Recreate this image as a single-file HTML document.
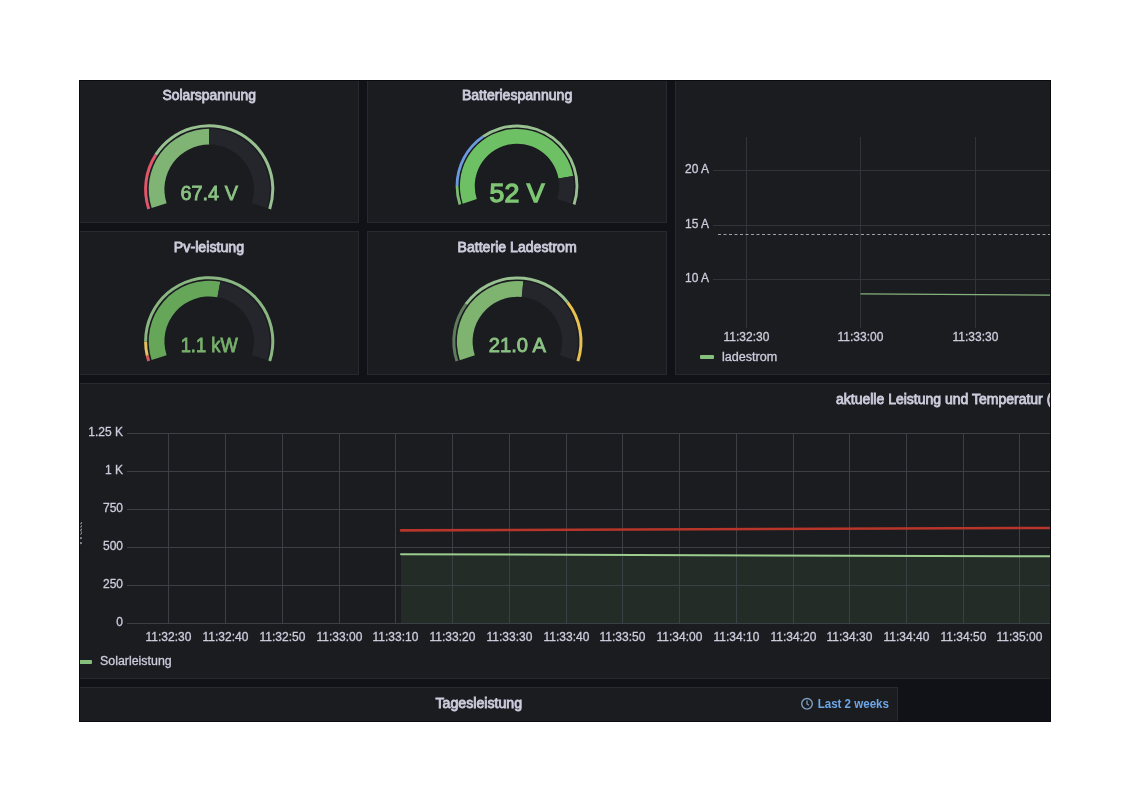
<!DOCTYPE html><html><head><meta charset="utf-8"><style>html,body{margin:0;padding:0;background:#fff;width:1122px;height:793px;overflow:hidden}</style></head><body><svg width="1122" height="793" viewBox="0 0 1122 793" style="display:block;font-family:'Liberation Sans', sans-serif;will-change:transform">
<rect width="1122" height="793" fill="#ffffff"/>
<defs><clipPath id="fc"><rect x="80" y="81" width="970" height="640"/></clipPath></defs>
<rect x="79" y="80" width="972" height="642" fill="#0a0b0d"/>
<g clip-path="url(#fc)">
<rect x="79" y="80" width="971" height="641" fill="#111217"/>
<rect x="59.5" y="79.5" width="299" height="143" fill="#1a1c20" stroke="#27292e" stroke-width="1"/>
<rect x="367.5" y="79.5" width="299" height="143" fill="#1a1c20" stroke="#27292e" stroke-width="1"/>
<rect x="59.5" y="231.5" width="299" height="143" fill="#1a1c20" stroke="#27292e" stroke-width="1"/>
<rect x="367.5" y="231.5" width="299" height="143" fill="#1a1c20" stroke="#27292e" stroke-width="1"/>
<rect x="675.5" y="79.5" width="525" height="295" fill="#1a1c20" stroke="#27292e" stroke-width="1"/>
<rect x="40.5" y="383.5" width="1160" height="295" fill="#1a1c20" stroke="#27292e" stroke-width="1"/>
<rect x="60.5" y="687.5" width="837" height="73" fill="#1a1c20" stroke="#27292e" stroke-width="1"/>
<text x="209.2" y="99.8" font-size="14" font-weight="normal" text-anchor="middle" fill="#ccccdc" textLength="93.6" lengthAdjust="spacingAndGlyphs" stroke="#ccccdc" stroke-width="0.8">Solarspannung</text>
<text x="517.1" y="99.6" font-size="14" font-weight="normal" text-anchor="middle" fill="#ccccdc" textLength="110.4" lengthAdjust="spacingAndGlyphs" stroke="#ccccdc" stroke-width="0.8">Batteriespannung</text>
<text x="209.0" y="251.8" font-size="14" font-weight="normal" text-anchor="middle" fill="#ccccdc" textLength="70.4" lengthAdjust="spacingAndGlyphs" stroke="#ccccdc" stroke-width="0.8">Pv-leistung</text>
<text x="517.1" y="251.8" font-size="14" font-weight="normal" text-anchor="middle" fill="#ccccdc" textLength="119.2" lengthAdjust="spacingAndGlyphs" stroke="#ccccdc" stroke-width="0.8">Batterie Ladestrom</text>
<text x="836" y="403.5" font-size="14" font-weight="normal" text-anchor="start" fill="#ccccdc" stroke="#ccccdc" stroke-width="0.8">aktuelle Leistung und Temperatur (W/°C)</text>
<text x="478.8" y="708" font-size="14" font-weight="normal" text-anchor="middle" fill="#ccccdc" textLength="86.6" lengthAdjust="spacingAndGlyphs" stroke="#ccccdc" stroke-width="0.8">Tagesleistung</text>
<path d="M151.66,208.00 A60.49999999999999,60.49999999999999 0 0 1 209.20,128.80 L209.20,144.50 A44.8,44.8 0 0 0 166.59,203.14 Z" fill="#80b474"/>
<path d="M209.20,128.80 A60.49999999999999,60.49999999999999 0 0 1 266.74,208.00 L251.81,203.14 A44.8,44.8 0 0 0 209.20,144.50 Z" fill="#25262c"/>
<path d="M147.29,209.42 A65.1,65.1 0 0 1 154.45,154.07 L156.98,155.70 A62.099999999999994,62.099999999999994 0 0 0 150.14,208.49 Z" fill="#e0566a"/>
<path d="M154.45,154.07 A65.1,65.1 0 0 1 271.11,209.42 L268.26,208.49 A62.099999999999994,62.099999999999994 0 0 0 156.98,155.70 Z" fill="#98c090"/>
<text x="209.2" y="200.0" font-size="20" font-weight="normal" text-anchor="middle" fill="#8cc284" textLength="57.5" lengthAdjust="spacingAndGlyphs" stroke="#8cc284" stroke-width="0.8">67.4 V</text>
<path d="M462.73,203.63 A57.06144393241168,57.06144393241168 0 1 1 573.18,176.01 L558.60,178.60 A42.25376344086022,42.25376344086022 0 1 0 476.81,199.06 Z" fill="#6ec065"/>
<path d="M573.18,176.01 A57.06144393241168,57.06144393241168 0 0 1 571.27,203.63 L557.19,199.06 A42.25376344086022,42.25376344086022 0 0 0 558.60,178.60 Z" fill="#25262c"/>
<path d="M458.61,204.97 A61.4,61.4 0 0 1 455.60,186.08 L458.43,186.07 A58.5705069124424,58.5705069124424 0 0 0 461.30,204.10 Z" fill="#7cba72"/>
<path d="M455.60,186.08 A61.4,61.4 0 0 1 482.17,135.44 L483.77,137.77 A58.5705069124424,58.5705069124424 0 0 0 458.43,186.07 Z" fill="#6c9ae0"/>
<path d="M482.17,135.44 A61.4,61.4 0 0 1 575.39,204.97 L572.70,204.10 A58.5705069124424,58.5705069124424 0 0 0 483.77,137.77 Z" fill="#98c090"/>
<text x="517.0" y="201.7" font-size="26" font-weight="normal" text-anchor="middle" fill="#7ec673" textLength="54.9" lengthAdjust="spacingAndGlyphs" stroke="#7ec673" stroke-width="1.3">52 V</text>
<path d="M151.66,360.00 A60.49999999999999,60.49999999999999 0 0 1 220.31,281.83 L217.43,297.26 A44.8,44.8 0 0 0 166.59,355.14 Z" fill="#65a659"/>
<path d="M220.31,281.83 A60.49999999999999,60.49999999999999 0 0 1 266.74,360.00 L251.81,355.14 A44.8,44.8 0 0 0 217.43,297.26 Z" fill="#25262c"/>
<path d="M147.29,361.42 A65.1,65.1 0 0 1 145.78,355.98 L148.70,355.30 A62.099999999999994,62.099999999999994 0 0 0 150.14,360.49 Z" fill="#d45a5a"/>
<path d="M145.78,355.98 A65.1,65.1 0 0 1 144.10,341.38 L147.10,341.38 A62.099999999999994,62.099999999999994 0 0 0 148.70,355.30 Z" fill="#e8c060"/>
<path d="M144.10,341.38 A65.1,65.1 0 1 1 271.11,361.42 L268.26,360.49 A62.099999999999994,62.099999999999994 0 1 0 147.10,341.38 Z" fill="#8ab682"/>
<text x="209.2" y="351.9" font-size="20" font-weight="normal" text-anchor="middle" fill="#78b06c" textLength="57.0" lengthAdjust="spacingAndGlyphs" stroke="#78b06c" stroke-width="0.8">1.1 kW</text>
<path d="M459.86,360.20 A60.49999999999999,60.49999999999999 0 0 1 523.32,281.29 L521.78,296.92 A44.8,44.8 0 0 0 474.79,355.34 Z" fill="#7fb470"/>
<path d="M523.32,281.29 A60.49999999999999,60.49999999999999 0 0 1 574.94,360.20 L560.01,355.34 A44.8,44.8 0 0 0 521.78,296.92 Z" fill="#25262c"/>
<path d="M455.49,361.62 A65.1,65.1 0 0 1 464.73,303.24 L467.16,305.00 A62.099999999999994,62.099999999999994 0 0 0 458.34,360.69 Z" fill="#5f7a5c"/>
<path d="M464.73,303.24 A65.1,65.1 0 0 1 568.74,301.47 L566.37,303.32 A62.099999999999994,62.099999999999994 0 0 0 467.16,305.00 Z" fill="#98c090"/>
<path d="M568.74,301.47 A65.1,65.1 0 0 1 579.31,361.62 L576.46,360.69 A62.099999999999994,62.099999999999994 0 0 0 566.37,303.32 Z" fill="#e8c050"/>
<text x="517.4" y="351.7" font-size="20" font-weight="normal" text-anchor="middle" fill="#8cc284" textLength="57.3" lengthAdjust="spacingAndGlyphs" stroke="#8cc284" stroke-width="0.8">21.0 A</text>
<line x1="746.5" y1="137" x2="746.5" y2="328" stroke="#313439" stroke-width="1"/>
<line x1="860.5" y1="137" x2="860.5" y2="328" stroke="#313439" stroke-width="1"/>
<line x1="975.5" y1="137" x2="975.5" y2="328" stroke="#313439" stroke-width="1"/>
<line x1="713" y1="170.5" x2="1060" y2="170.5" stroke="#313439" stroke-width="1"/>
<text x="709" y="173.2" font-size="12" font-weight="normal" text-anchor="end" fill="#ccccdc" stroke="#ccccdc" stroke-width="0.3">20 A</text>
<line x1="713" y1="225.5" x2="1060" y2="225.5" stroke="#313439" stroke-width="1"/>
<text x="709" y="228.2" font-size="12" font-weight="normal" text-anchor="end" fill="#ccccdc" stroke="#ccccdc" stroke-width="0.3">15 A</text>
<line x1="713" y1="279.5" x2="1060" y2="279.5" stroke="#313439" stroke-width="1"/>
<text x="709" y="282.2" font-size="12" font-weight="normal" text-anchor="end" fill="#ccccdc" stroke="#ccccdc" stroke-width="0.3">10 A</text>
<line x1="718" y1="234.5" x2="1060" y2="234.5" stroke="#a0a0aa" stroke-width="1" stroke-dasharray="3,2.5"/>
<line x1="860.5" y1="293.8" x2="1060" y2="295.1" stroke="#88b27c" stroke-width="1.2"/>
<text x="746.5" y="341" font-size="12" font-weight="normal" text-anchor="middle" fill="#ccccdc" stroke="#ccccdc" stroke-width="0.3">11:32:30</text>
<text x="860.5" y="341" font-size="12" font-weight="normal" text-anchor="middle" fill="#ccccdc" stroke="#ccccdc" stroke-width="0.3">11:33:00</text>
<text x="975.5" y="341" font-size="12" font-weight="normal" text-anchor="middle" fill="#ccccdc" stroke="#ccccdc" stroke-width="0.3">11:33:30</text>
<rect x="700" y="355" width="14" height="4" rx="1" fill="#86c07c"/>
<text x="722" y="361" font-size="12" font-weight="normal" text-anchor="start" fill="#ccccdc" textLength="55.3" lengthAdjust="spacingAndGlyphs" stroke="#ccccdc" stroke-width="0.3">ladestrom</text>
<path d="M401,554.2 L1060,556.4 L1060,623 L401,623 Z" fill="#73bf69" fill-opacity="0.1"/>
<line x1="168.5" y1="433" x2="168.5" y2="623.5" stroke="#3c3f44" stroke-width="1"/>
<line x1="225.5" y1="433" x2="225.5" y2="623.5" stroke="#3c3f44" stroke-width="1"/>
<line x1="282.5" y1="433" x2="282.5" y2="623.5" stroke="#3c3f44" stroke-width="1"/>
<line x1="339.5" y1="433" x2="339.5" y2="623.5" stroke="#3c3f44" stroke-width="1"/>
<line x1="395.5" y1="433" x2="395.5" y2="623.5" stroke="#3c3f44" stroke-width="1"/>
<line x1="452.5" y1="433" x2="452.5" y2="623.5" stroke="#3c3f44" stroke-width="1"/>
<line x1="509.5" y1="433" x2="509.5" y2="623.5" stroke="#3c3f44" stroke-width="1"/>
<line x1="566.5" y1="433" x2="566.5" y2="623.5" stroke="#3c3f44" stroke-width="1"/>
<line x1="622.5" y1="433" x2="622.5" y2="623.5" stroke="#3c3f44" stroke-width="1"/>
<line x1="679.5" y1="433" x2="679.5" y2="623.5" stroke="#3c3f44" stroke-width="1"/>
<line x1="736.5" y1="433" x2="736.5" y2="623.5" stroke="#3c3f44" stroke-width="1"/>
<line x1="793.5" y1="433" x2="793.5" y2="623.5" stroke="#3c3f44" stroke-width="1"/>
<line x1="849.5" y1="433" x2="849.5" y2="623.5" stroke="#3c3f44" stroke-width="1"/>
<line x1="906.5" y1="433" x2="906.5" y2="623.5" stroke="#3c3f44" stroke-width="1"/>
<line x1="963.5" y1="433" x2="963.5" y2="623.5" stroke="#3c3f44" stroke-width="1"/>
<line x1="1019.5" y1="433" x2="1019.5" y2="623.5" stroke="#3c3f44" stroke-width="1"/>
<line x1="127" y1="433.5" x2="1060" y2="433.5" stroke="#3c3f44" stroke-width="1"/>
<text x="123" y="436.2" font-size="12" font-weight="normal" text-anchor="end" fill="#ccccdc" stroke="#ccccdc" stroke-width="0.3">1.25 K</text>
<line x1="127" y1="471.5" x2="1060" y2="471.5" stroke="#3c3f44" stroke-width="1"/>
<text x="123" y="474.2" font-size="12" font-weight="normal" text-anchor="end" fill="#ccccdc" stroke="#ccccdc" stroke-width="0.3">1 K</text>
<line x1="127" y1="509.5" x2="1060" y2="509.5" stroke="#3c3f44" stroke-width="1"/>
<text x="123" y="512.2" font-size="12" font-weight="normal" text-anchor="end" fill="#ccccdc" stroke="#ccccdc" stroke-width="0.3">750</text>
<line x1="127" y1="547.5" x2="1060" y2="547.5" stroke="#3c3f44" stroke-width="1"/>
<text x="123" y="550.2" font-size="12" font-weight="normal" text-anchor="end" fill="#ccccdc" stroke="#ccccdc" stroke-width="0.3">500</text>
<line x1="127" y1="585.5" x2="1060" y2="585.5" stroke="#3c3f44" stroke-width="1"/>
<text x="123" y="588.2" font-size="12" font-weight="normal" text-anchor="end" fill="#ccccdc" stroke="#ccccdc" stroke-width="0.3">250</text>
<line x1="127" y1="623.5" x2="1060" y2="623.5" stroke="#3c3f44" stroke-width="1"/>
<text x="123" y="626.2" font-size="12" font-weight="normal" text-anchor="end" fill="#ccccdc" stroke="#ccccdc" stroke-width="0.3">0</text>
<text x="168.5" y="641" font-size="12" font-weight="normal" text-anchor="middle" fill="#ccccdc" stroke="#ccccdc" stroke-width="0.3">11:32:30</text>
<text x="225.5" y="641" font-size="12" font-weight="normal" text-anchor="middle" fill="#ccccdc" stroke="#ccccdc" stroke-width="0.3">11:32:40</text>
<text x="282.5" y="641" font-size="12" font-weight="normal" text-anchor="middle" fill="#ccccdc" stroke="#ccccdc" stroke-width="0.3">11:32:50</text>
<text x="339.5" y="641" font-size="12" font-weight="normal" text-anchor="middle" fill="#ccccdc" stroke="#ccccdc" stroke-width="0.3">11:33:00</text>
<text x="395.5" y="641" font-size="12" font-weight="normal" text-anchor="middle" fill="#ccccdc" stroke="#ccccdc" stroke-width="0.3">11:33:10</text>
<text x="452.5" y="641" font-size="12" font-weight="normal" text-anchor="middle" fill="#ccccdc" stroke="#ccccdc" stroke-width="0.3">11:33:20</text>
<text x="509.5" y="641" font-size="12" font-weight="normal" text-anchor="middle" fill="#ccccdc" stroke="#ccccdc" stroke-width="0.3">11:33:30</text>
<text x="566.5" y="641" font-size="12" font-weight="normal" text-anchor="middle" fill="#ccccdc" stroke="#ccccdc" stroke-width="0.3">11:33:40</text>
<text x="622.5" y="641" font-size="12" font-weight="normal" text-anchor="middle" fill="#ccccdc" stroke="#ccccdc" stroke-width="0.3">11:33:50</text>
<text x="679.5" y="641" font-size="12" font-weight="normal" text-anchor="middle" fill="#ccccdc" stroke="#ccccdc" stroke-width="0.3">11:34:00</text>
<text x="736.5" y="641" font-size="12" font-weight="normal" text-anchor="middle" fill="#ccccdc" stroke="#ccccdc" stroke-width="0.3">11:34:10</text>
<text x="793.5" y="641" font-size="12" font-weight="normal" text-anchor="middle" fill="#ccccdc" stroke="#ccccdc" stroke-width="0.3">11:34:20</text>
<text x="849.5" y="641" font-size="12" font-weight="normal" text-anchor="middle" fill="#ccccdc" stroke="#ccccdc" stroke-width="0.3">11:34:30</text>
<text x="906.5" y="641" font-size="12" font-weight="normal" text-anchor="middle" fill="#ccccdc" stroke="#ccccdc" stroke-width="0.3">11:34:40</text>
<text x="963.5" y="641" font-size="12" font-weight="normal" text-anchor="middle" fill="#ccccdc" stroke="#ccccdc" stroke-width="0.3">11:34:50</text>
<text x="1019.5" y="641" font-size="12" font-weight="normal" text-anchor="middle" fill="#ccccdc" stroke="#ccccdc" stroke-width="0.3">11:35:00</text>
<line x1="401" y1="530.4" x2="1060" y2="527.9" stroke="#b8352a" stroke-width="2.6" stroke-linecap="round"/>
<line x1="401" y1="554.2" x2="1060" y2="556.4" stroke="#9ccc8e" stroke-width="2" stroke-linecap="round"/>
<rect x="70" y="660" width="22" height="4" rx="1" fill="#86c07c"/>
<text x="100" y="665" font-size="12" font-weight="normal" text-anchor="start" fill="#ccccdc" textLength="71.7" lengthAdjust="spacingAndGlyphs" stroke="#ccccdc" stroke-width="0.3">Solarleistung</text>
<text x="81.5" y="534" font-size="12" font-weight="normal" text-anchor="middle" fill="#8a8b94" transform="rotate(-90 81.5 534)">Watt</text>
<circle cx="807" cy="703.8" r="5.3" fill="none" stroke="#7e9fc0" stroke-width="1.4"/>
<path d="M807,700.6 L807,704 L809,705.2" fill="none" stroke="#7e9fc0" stroke-width="1.3"/>
<text x="817.7" y="707.6" font-size="12" font-weight="bold" text-anchor="start" fill="#6ea6e6" textLength="71.2" lengthAdjust="spacingAndGlyphs">Last 2 weeks</text>
</g>
</svg></body></html>
